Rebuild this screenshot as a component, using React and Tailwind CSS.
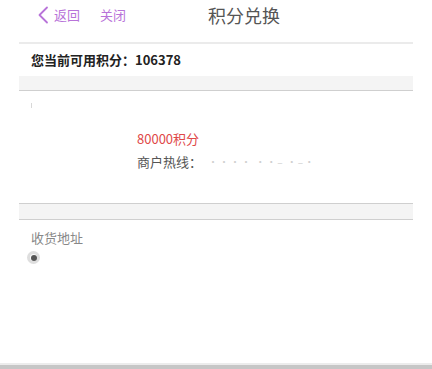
import React from 'react';

const font = { fontFamily: '"Noto Sans CJK SC", "Noto Sans", sans-serif' };

const App = () => {
  return (
    <div className="w-[432px] h-[369px] bg-white flex flex-col overflow-hidden" style={font}>
      {/* Header */}
      <div className="h-[30px] mb-[12px] flex items-center">
        <button className="ml-[37px] flex items-center text-[#b873d9] text-[13px]">
          <svg width="12" height="18" viewBox="0 0 12 18" fill="none">
            <path d="M10 1.5 L2.5 9 L10 16.5" stroke="#b873d9" strokeWidth="1.8" strokeLinecap="round" strokeLinejoin="round" />
          </svg>
          <span className="ml-[5px]">返回</span>
        </button>
        <button className="ml-[20px] text-[#b873d9] text-[13px]">关闭</button>
        <h1 className="ml-[82px] text-[18px] text-[#555] leading-none">积分兑换</h1>
      </div>

      <div className="mx-[19px] flex flex-col flex-1">
        {/* Points */}
        <div className="border-t-2 border-[#ebebeb] h-[34px] flex items-center pl-[12px]">
          <p className="text-[13px] font-bold text-[#222]">您当前可用积分：106378</p>
        </div>
        <div className="h-[15px] bg-[#f4f4f4] border-b border-[#cfcfcf]"></div>

        {/* Product */}
        <div className="h-[112px] relative">
          <span className="absolute left-[12px] top-[12px] w-px h-[5px] bg-[#d8d8d8]"></span>
          <div className="pt-[38px] pl-[118px]">
            <p className="text-[13px] text-[#e04848] leading-[20px]">80000积分</p>
            <p className="text-[13px] text-[#555] leading-[20px] mt-[3px] flex items-center">
              商户热线：
              <span className="ml-[6px] text-[10px] text-[#d0d0d0] tracking-[1px]">····  ··–  ·–·</span>
            </p>
          </div>
        </div>
        <div className="h-[17px] bg-[#f4f4f4] border-y border-[#cfcfcf]"></div>

        {/* Address */}
        <div className="pl-[12px] pt-[10px]">
          <p className="text-[13px] text-[#888] leading-[16px]">收货地址</p>
          <div className="mt-[5px] -ml-[4px] w-[13px] h-[13px] rounded-full border-[3px] border-[#dedede] bg-[#fafafa] flex items-center justify-center">
            <div className="w-[6px] h-[6px] rounded-full bg-[#555]"></div>
          </div>
        </div>
      </div>

      {/* Bottom bar */}
      <div className="h-[6px] border-t-2 border-[#ececec] bg-[#c6c6c6]"></div>
    </div>
  );
};

export default App;
